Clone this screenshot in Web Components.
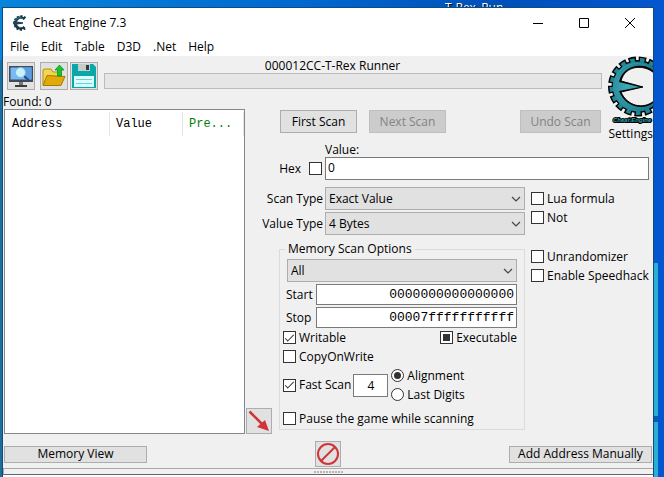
<!DOCTYPE html>
<html lang="en">
<head>
<meta charset="utf-8">
<title>Cheat Engine 7.3</title>
<style>
html, body { margin: 0; height: 100%; }
body { font: 12px/16px "Open Sans", "Noto Sans", sans-serif; color: #000; overflow: hidden; }
</style>
</head>
<body>
<ce-desktop>
  <ce-window></ce-window>
</ce-desktop>

<script>
const define = (name, html, setup) => customElements.define(name, class extends HTMLElement {
  constructor() {
    super();
    this.attachShadow({ mode: "open" }).innerHTML = html;
  }
  connectedCallback() { if (setup) setup(this, this.shadowRoot); }
});

define("ce-button", `
<style>
:host { display: block; }
button { box-sizing: border-box; width: 100%; height: 100%; margin: 0; padding: 0; display: flex; align-items: center; justify-content: center;
  font: inherit; color: #000; background: #e1e1e1; border: 1px solid #adadad; white-space: nowrap; }
button:disabled { color: #838383; background: #ccc; border-color: #bfbfbf; }
</style>
<button type="button"><slot></slot></button>`, (el, root) => {
  const b = root.querySelector("button");
  b.disabled = el.hasAttribute("disabled");
  if (el.hasAttribute("label")) b.setAttribute("aria-label", el.getAttribute("label"));
});

define("ce-check", `
<style>
:host { display: block; }
label { display: flex; align-items: center; gap: 3px; height: 19px; white-space: nowrap; }
input { appearance: none; box-sizing: border-box; flex: none; width: 13px; height: 13px; margin: 0; border: 1px solid #333; background: #fff; display: grid; place-content: center; }
input[type=radio] { border-radius: 50%; }
input[type=checkbox]:checked::before { content: ""; width: 8px; height: 3px; border: solid #333; border-width: 0 0 1px 1px; transform: translateY(-1px) rotate(-45deg); }
input[type=checkbox]:indeterminate::before { content: ""; width: 7px; height: 7px; background: #333; }
input[type=radio]:checked::before { content: ""; width: 7px; height: 7px; border-radius: 50%; background: #333; }
:host([before]) label { flex-direction: row-reverse; justify-content: flex-start; gap: 8px; }
</style>
<label><input type="checkbox"><span><slot></slot></span></label>`, (el, root) => {
  const i = root.querySelector("input");
  if (el.hasAttribute("radio")) i.type = "radio";
  i.checked = el.hasAttribute("checked");
  i.indeterminate = el.hasAttribute("mixed");
});

define("ce-select", `
<style>
:host { display: contents; }
label { text-align: right; padding-right: 2px; line-height: 23px; white-space: nowrap; }
:host([bare]) label { display: none; }
div { display: grid; height: 23px; }
select { appearance: none; grid-area: 1 / 1; box-sizing: border-box; width: 100%; height: 100%; padding: 0 20px 0 3px; margin: 0; font: inherit; color: #000; background: #e1e1e1; border: 1px solid #adadad; border-radius: 0; }
svg { grid-area: 1 / 1; place-self: center end; margin-right: 4px; pointer-events: none; }
</style>
<label for="s"></label>
<div><select id="s"><option></option></select>
<svg width="10" height="6" viewBox="0 0 10 6" fill="none" stroke="#444" stroke-width="1.2"><path d="M1 1l4 4 4-4"/></svg></div>`, (el, root) => {
  root.querySelector("option").textContent = el.getAttribute("value");
  if (el.hasAttribute("bare")) root.querySelector("select").setAttribute("aria-label", el.getAttribute("label"));
  else root.querySelector("label").textContent = el.getAttribute("label");
});

define("ce-address", `
<style>
:host { display: grid; grid-template-columns: 29px 1fr; align-items: center; height: 21px; }
label { margin-left: -1px; }
input { box-sizing: border-box; width: 100%; min-width: 0; height: 21px; margin: 0; padding: 0 2px; border: 1px solid #7a7a7a; text-align: right; font: 13px/16px "Liberation Mono", monospace; color: #000; }
</style>
<label for="a"></label><input id="a" type="text">`, (el, root) => {
  root.querySelector("label").textContent = el.getAttribute("label");
  root.querySelector("input").value = el.getAttribute("value");
});

define("ce-titlebar", `
<style>
:host { display: flex; align-items: center; height: 30px; background: #fff; }
.mark { margin: 0 6px 0 8px; }
h1 { flex: 1; margin: 0; font: inherit; }
button { width: 46px; height: 30px; padding: 0; border: 0; background: none; display: grid; place-content: center; }
</style>
<svg class="mark" width="16" height="16" viewBox="0 0 16 16" fill="none">
<path d="M14 3.500A6 6 0 1 0 14 12.500" stroke="#173848" stroke-width="3.600" stroke-dasharray="1.700 1.400"/>
<path d="M13.500 4A5.500 5.500 0 1 0 13.500 12" stroke="#173848" stroke-width="2.400"/>
<path d="M12 4A5 5 0 0 0 4 6" stroke="#2a7f99"/><path d="M3 6.500l9 1.500-9 1.500z" fill="#1d5064" stroke="#173848"/></svg>
<h1>Cheat Engine 7.3</h1>
<button aria-label="Minimize"><svg width="10" height="10"><path d="M0 5.500h10" stroke="#000"/></svg></button>
<button aria-label="Maximize"><svg width="10" height="10"><path d="M.5.5h9v9h-9z" fill="none" stroke="#000"/></svg></button>
<button aria-label="Close"><svg width="10" height="10"><path d="M0 0l10 10M10 0L0 10" stroke="#000"/></svg></button>`);

define("ce-menu", `
<style>
nav { display: flex; gap: 12px; height: 18px; padding: 0 7px; background: #fff; align-items: center; }
button { padding: 0; border: 0; background: none; font: inherit; color: #000; line-height: 18px; }
</style>
<nav><button>File</button><button>Edit</button><button>Table</button><button>D3D</button><button>.Net</button><button>Help</button></nav>`);

define("ce-toolbar", `
<style>
:host { display: flex; padding: 6px 0 0 4px; }
ce-button { width: 28px; height: 28px; flex: none; }
ce-button:nth-of-type(1) { margin-right: 5px; }
ce-button:nth-of-type(2) { margin-right: 2px; }
.process { flex: 1; margin: -4px 0 0 6px; }
p { margin: 0; padding-right: 41px; text-align: center; line-height: 15px; }
.bar { height: 14px; border: 1px solid #bcbcbc; background: #e6e6e6; }
</style>
<ce-button label="Open process"><svg width="26" height="26" viewBox="0 0 26 26">
<path d="M1 3h24v16H1z" fill="#3f4b57"/><path d="M2.500 4.500h21v12h-21z" fill="#78baf7"/><path d="M12 4.500h11.500v12H17z" fill="#5a9fe6"/>
<path d="M11 19h4v3h-4z" fill="#777"/><path d="M7 22h12v2H7z" fill="#3b3b3b"/>
<path d="M16 13l5 4.500" stroke="#304878" stroke-width="2"/><circle cx="12.500" cy="9.500" r="5" fill="#c9f2fb" stroke="#7dbbd8"/></svg></ce-button>
<ce-button label="Load"><svg width="26" height="26" viewBox="0 0 26 26">
<path d="M2 22V7l1-1h7l2 3h8v13z" fill="#f2d552" stroke="#b79012"/><path d="M2 22.500l4-10 18 1-4 9z" fill="#dfab08" stroke="#a97a04"/>
<path d="M18.500 2l4.500 5h-2.500v6h-4V7H14z" fill="#19c52c" stroke="#078a19" stroke-width=".7"/></svg></ce-button>
<ce-button label="Save"><svg width="26" height="26" viewBox="0 0 26 26">
<path d="M1 1h21l3 3v21H1z" fill="#08a8aa"/><path d="M7 1h12v7H7z" fill="#c4cccc"/><path d="M15 2h3v5h-3z" fill="#313b3b"/>
<path d="M3 13h20v11H3z" fill="#d8ffff"/><path d="M5 16.500h16M5 20.500h16" stroke="#7acbd0"/></svg></ce-button>
<div class="process"><p>000012CC-T-Rex Runner</p><div class="bar" role="progressbar" aria-label="Scan progress"></div></div>`);

define("ce-settings", `
<style>
button { display: flex; flex-direction: column; align-items: flex-end; width: 100%; padding: 0; border: 0; background: none; font: inherit; color: #000; }
svg { display: block; }
</style>
<button type="button"><svg width="46" height="70" viewBox="0 0 46 70">
<defs><radialGradient id="g" cx=".35" cy=".5" r=".7"><stop offset="0" stop-color="#3fa9b6"/><stop offset="1" stop-color="#187788"/></radialGradient></defs>
<path d="M47 10A26 26 0 1 0 47 51" fill="none" stroke="#000" stroke-width="8" stroke-dasharray="7 2.500"/>
<path d="M47 10A26 26 0 1 0 47 51V45C36 54 20 50 14 36L36 31 14 25C18 9 37 8 47 17Z" stroke="#000"/>
<path d="M47 10A26 26 0 1 0 47 51" fill="none" stroke="#1f8494" stroke-width="5" stroke-dasharray="4.500 5" stroke-dashoffset="-1.250"/>
<path d="M47 11.500A25 25 0 1 0 47 49.500L46 47C36 55 18 51 12 35L33 31 12 26C16 8 37 6 47 15Z" fill="url(#g)"/>
<path d="M9 21C15 8 30 4 43 11" fill="none" stroke="#46aebb" opacity=".4"/>
<text x="6" y="66" font-family="Liberation Sans Narrow, Liberation Sans, sans-serif" font-size="6" font-weight="700" font-style="italic" fill="#29a6b5" stroke="#000" stroke-width="2" paint-order="stroke">Cheat Engine</text></svg>
<span>Settings</span></button>`);

define("ce-results", `
<style>
:host { display: flex; flex-direction: column; padding: 0 0 0 1px; }
p { margin: 0 0 0 -1px; line-height: 15px; }
.list { flex: 1; border: 1px solid #828790; background: #fff; }
table { border-collapse: collapse; table-layout: fixed; width: 100%; margin-top: 2px; font: 12px/24px "Liberation Mono", monospace; }
th { padding: 0 0 0 6px; text-align: left; font-weight: 400; border-right: 1px solid #e5e5e5; white-space: nowrap; }
th:first-child { padding-left: 7px; width: 97px; }
th:nth-child(2) { width: 66px; }
th:last-child { color: #008000; }
</style>
<p>Found: 0</p>
<div class="list"><table><thead><tr><th>Address</th><th>Value</th><th>Pre...</th></tr></thead></table></div>`);

define("ce-options", `
<style>
fieldset { box-sizing: border-box; min-width: 0; margin: 0; padding: 2px 7px 0; border: 1px solid #dcdcdc; height: 189px; }
legend { padding: 0 3px; margin-left: -2px; }
.stack { display: grid; gap: 2px; }
.row { display: flex; justify-content: space-between; margin-left: -4px; }
.fast { display: flex; align-items: center; margin: 0 0 5px -4px; }
.fast input { box-sizing: border-box; width: 35px; height: 23px; margin: 0 3px 0 2px; padding: 0; border: 1px solid #7a7a7a; font: inherit; text-align: center; }
.line { margin-left: -4px; }
</style>
<fieldset><legend>Memory Scan Options</legend>
<div class="stack"><ce-select bare label="Memory region" value="All"></ce-select>
<ce-address label="Start" value="0000000000000000"></ce-address>
<ce-address label="Stop" value="00007fffffffffff"></ce-address></div>
<div class="row"><ce-check checked>Writable</ce-check><ce-check mixed>Executable</ce-check></div>
<ce-check class="line">CopyOnWrite</ce-check>
<div class="fast"><ce-check checked>Fast Scan</ce-check><input type="text" value="4" aria-label="Fast scan alignment">
<div><ce-check radio checked>Alignment</ce-check><ce-check radio>Last Digits</ce-check></div></div>
<ce-check class="line">Pause the game while scanning</ce-check>
</fieldset>`);

define("ce-scan", `
<style>
:host { display: grid; grid-template-columns: 80px 200px 1fr; grid-template-rows: 14px 24px 23px 23px 1fr; padding-right: 5px; }
.caption { grid-area: 1 / 2; line-height: 14px; }
.hex { grid-area: 2 / 1; margin: 2px 3px 0 0; }
.value { grid-area: 2 / 2 / 3 / 4; box-sizing: border-box; width: 100%; height: 23px; margin: 0; padding: 0 2px 2px; border: 1px solid #7a7a7a; font: inherit; }
.types { grid-area: 3 / 1 / 5 / 3; display: grid; grid-template-columns: 80px 1fr; row-gap: 2px; padding-top: 6px; }
.side { grid-area: 3 / 3 / 6 / 4; padding: 8px 0 0 6px; }
.side ce-check:nth-child(2) { margin-bottom: 20px; }
ce-options { grid-area: 5 / 1 / 6 / 3; margin: 14px 0 4px 34px; }
.move { grid-area: 5 / 1; align-self: end; justify-self: start; width: 26px; height: 26px; margin-left: 1px; }
</style>
<label class="caption" for="v">Value:</label>
<ce-check class="hex" before>Hex</ce-check>
<input class="value" id="v" type="text" value="0">
<div class="types"><ce-select label="Scan Type" value="Exact Value"></ce-select><ce-select label="Value Type" value="4 Bytes"></ce-select></div>
<div class="side"><ce-check>Lua formula</ce-check><ce-check>Not</ce-check><ce-check>Unrandomizer</ce-check><ce-check>Enable Speedhack</ce-check></div>
<ce-options></ce-options>
<ce-button class="move" label="Copy selected addresses"><svg width="24" height="24" viewBox="0 0 24 24"><path d="M2.500 2.500L17 17" stroke="#d13438" stroke-width="2.500"/><path d="M22 22l-4-11-8 7z" fill="#d13438"/></svg></ce-button>`);

define("ce-footer", `
<style>
:host { display: block; }
.row { display: grid; grid-template-columns: 143px 1fr 143px; padding: 7px 1px 1px; align-items: center; }
.row ce-button { height: 17px; }
.row .clear { width: 26px; height: 26px; justify-self: center; }
.split { height: 5px; border: solid #a8a8a8; border-width: 1px 0 0 1px; border-bottom: 1px solid #666; display: grid; place-content: center; }
.grip { width: 29px; height: 2px; background: repeating-linear-gradient(90deg, #b5b5b5 0 2px, transparent 2px 3px); }
.table { height: 8px; background: #fff; }
</style>
<div class="row"><ce-button>Memory View</ce-button>
<ce-button class="clear" label="Clear list"><svg width="24" height="24" viewBox="0 0 24 24" fill="none" stroke="#d13438" stroke-width="2"><circle cx="12" cy="12" r="10"/><path d="M5 19L19 5"/></svg></ce-button>
<ce-button>Add Address Manually</ce-button></div>
<div class="split"><div class="grip"></div></div><div class="table"></div>`);

define("ce-window", `
<style>
:host { display: block; border: solid #124a80; border-width: 1px 1px 0; background: #f0f0f0; }
main { display: grid; grid-template-columns: 242px 1fr 51px; grid-template-rows: 38px 49px auto; }
ce-toolbar { grid-area: 1 / 1 / 2 / 3; }
ce-settings { grid-area: 1 / 3 / 3 / 4; margin-left: 3px; }
ce-results { grid-area: 2 / 1 / 4 / 2; }
.actions { grid-area: 2 / 2; display: flex; gap: 12px; padding: 16px 1px 10px 35px; }
.actions ce-button { width: 77px; }
.actions ce-button:last-child { width: 81px; margin-left: auto; }
ce-scan { grid-area: 3 / 2 / 4 / 4; }
</style>
<ce-titlebar></ce-titlebar><ce-menu></ce-menu>
<main><ce-toolbar></ce-toolbar><ce-settings></ce-settings><ce-results></ce-results>
<div class="actions"><ce-button>First Scan</ce-button><ce-button disabled>Next Scan</ce-button><ce-button disabled>Undo Scan</ce-button></div>
<ce-scan></ce-scan></main>
<ce-footer></ce-footer>`);

define("ce-desktop", `
<style>
:host { display: block; position: relative; box-sizing: border-box; min-height: 100%; padding: 7px 10px 0 2px; overflow: hidden;
  background: linear-gradient(90deg, #1b6f9c 3px, transparent 3px) 0 60px no-repeat, linear-gradient(90deg, #0785dc, #0068cf 45%, #0050ba 75%, #0356cf); }
.icon { position: absolute; left: 445px; top: 0; color: #fff; line-height: 16px; text-shadow: 1px 1px 1px #000; }
.panes { position: absolute; right: 6px; top: 263px; bottom: 0; width: 5px; background: linear-gradient(#28b0d4 0 153px, #075cab 153px 159px, #28b0d4 159px); }
::slotted(ce-window) { position: relative; }
</style>
<span class="icon">T-Rex_Run...</span><div class="panes"></div><slot></slot>`);
</script>
</body>
</html>
